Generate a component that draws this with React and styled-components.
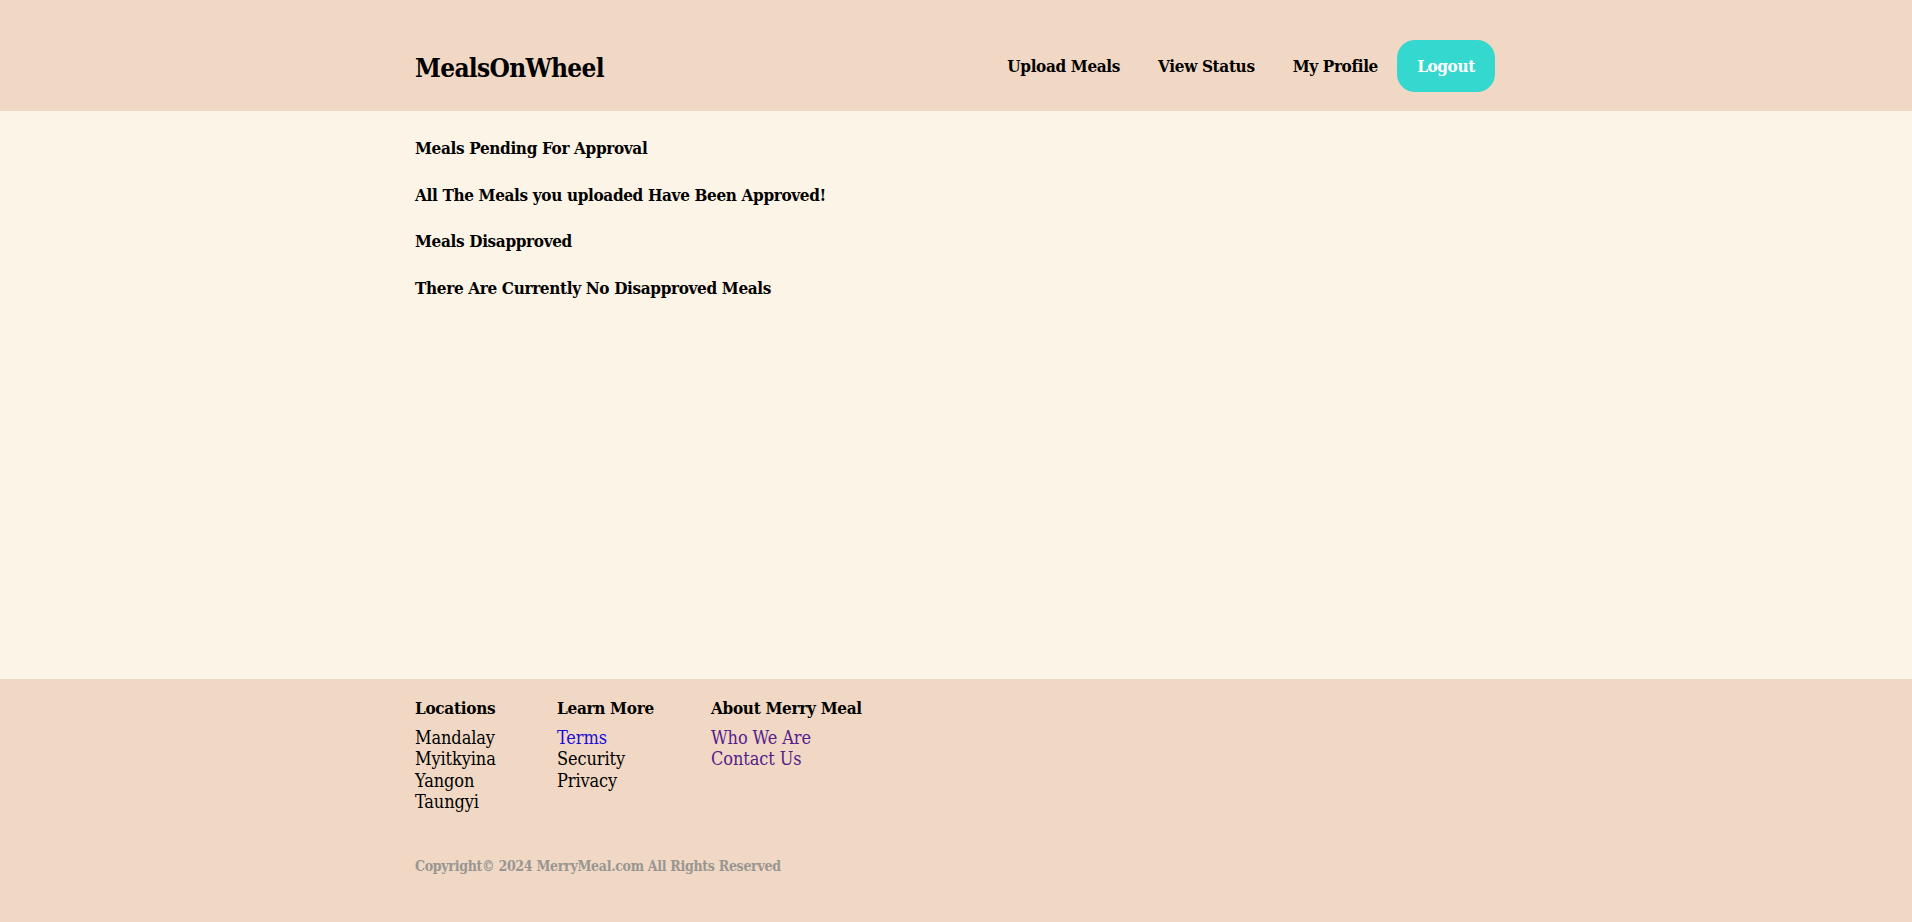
import React from "react";
import styled, { createGlobalStyle } from "styled-components";

const FONT = `"DejaVu Serif", "Liberation Serif", serif`;

const GlobalStyle = createGlobalStyle`
  html, body { margin: 0; padding: 0; }
  body {
    font-family: ${FONT};
    font-stretch: condensed;
    background: #fcf4e7;
    color: #000;
  }
  * { box-sizing: border-box; }
`;

const Page = styled.div`
  height: 922px;
  display: flex;
  flex-direction: column;
  overflow: hidden;
`;

const Header = styled.header`
  background: #f0d8c4;
  height: 111px;
  flex: none;
  padding-top: 40px;
`;

const Container = styled.div`
  width: 1082px;
  margin: 0 auto;
  padding-right: 2px;
`;

const HeaderInner = styled(Container)`
  display: flex;
  align-items: center;
  justify-content: space-between;
  height: 52px;
`;

const Logo = styled.div`
  font-size: 26px;
  font-weight: 700;
  letter-spacing: -0.7px;
  margin-top: 4px;
`;

const Nav = styled.nav`
  display: flex;
  align-items: center;
`;

const NavLink = styled.a`
  font-size: 17px;
  font-weight: 700;
  letter-spacing: -0.35px;
  color: #000;
  text-decoration: none;
  padding: 0 19px;
`;

const LogoutButton = styled.button`
  font-family: ${FONT};
  font-stretch: condensed;
  font-size: 17px;
  font-weight: 700;
  letter-spacing: -0.4px;
  color: #fff;
  background: #34d8cf;
  border: none;
  border-radius: 18px;
  height: 52px;
  width: 98px;
  padding: 0;
  cursor: pointer;
`;

const Main = styled.main`
  background: #fcf4e7;
  height: 568px;
  flex: none;
  padding-top: 26px;
`;

const Heading = styled.h3`
  font-size: 17px;
  font-weight: 700;
  letter-spacing: -0.35px;
  line-height: 22px;
  margin: 0 0 24.5px;
`;

const Footer = styled.footer`
  background: #f0d8c4;
  flex: 1;
  padding-top: 18px;
`;

const Columns = styled.div`
  display: grid;
  grid-template-columns: 142px 154px auto;
`;

const Column = styled.div`
  display: flex;
  flex-direction: column;
`;

const ColumnTitle = styled.div`
  font-size: 17px;
  font-weight: 700;
  letter-spacing: -0.3px;
  line-height: 22px;
  margin-bottom: 8px;
`;

const FooterLink = styled.a`
  font-size: 18px;
  line-height: 21.3px;
  letter-spacing: -0.1px;
  text-decoration: none;
  color: ${(p) => p.$color || "#000"};
`;

const Copyright = styled.div`
  margin-top: 45px;
  font-size: 14px;
  font-weight: 700;
  letter-spacing: -0.3px;
  line-height: 18px;
  color: #999692;
`;

export default function App() {
  return (
    <>
      <GlobalStyle />
      <Page>
        <Header>
          <HeaderInner>
            <Logo>MealsOnWheel</Logo>
            <Nav>
              <NavLink href="#">Upload Meals</NavLink>
              <NavLink href="#">View Status</NavLink>
              <NavLink href="#">My Profile</NavLink>
              <LogoutButton>Logout</LogoutButton>
            </Nav>
          </HeaderInner>
        </Header>
        <Main>
          <Container>
            <Heading>Meals Pending For Approval</Heading>
            <Heading>All The Meals you uploaded Have Been Approved!</Heading>
            <Heading>Meals Disapproved</Heading>
            <Heading>There Are Currently No Disapproved Meals</Heading>
          </Container>
        </Main>
        <Footer>
          <Container>
            <Columns>
              <Column>
                <ColumnTitle>Locations</ColumnTitle>
                <FooterLink>Mandalay</FooterLink>
                <FooterLink>Myitkyina</FooterLink>
                <FooterLink>Yangon</FooterLink>
                <FooterLink>Taungyi</FooterLink>
              </Column>
              <Column>
                <ColumnTitle>Learn More</ColumnTitle>
                <FooterLink href="#" $color="#1a0dd6">Terms</FooterLink>
                <FooterLink>Security</FooterLink>
                <FooterLink>Privacy</FooterLink>
              </Column>
              <Column>
                <ColumnTitle>About Merry Meal</ColumnTitle>
                <FooterLink href="#" $color="#55208c">Who We Are</FooterLink>
                <FooterLink href="#" $color="#55208c">Contact Us</FooterLink>
              </Column>
            </Columns>
            <Copyright>Copyright© 2024 MerryMeal.com All Rights Reserved</Copyright>
          </Container>
        </Footer>
      </Page>
    </>
  );
}
